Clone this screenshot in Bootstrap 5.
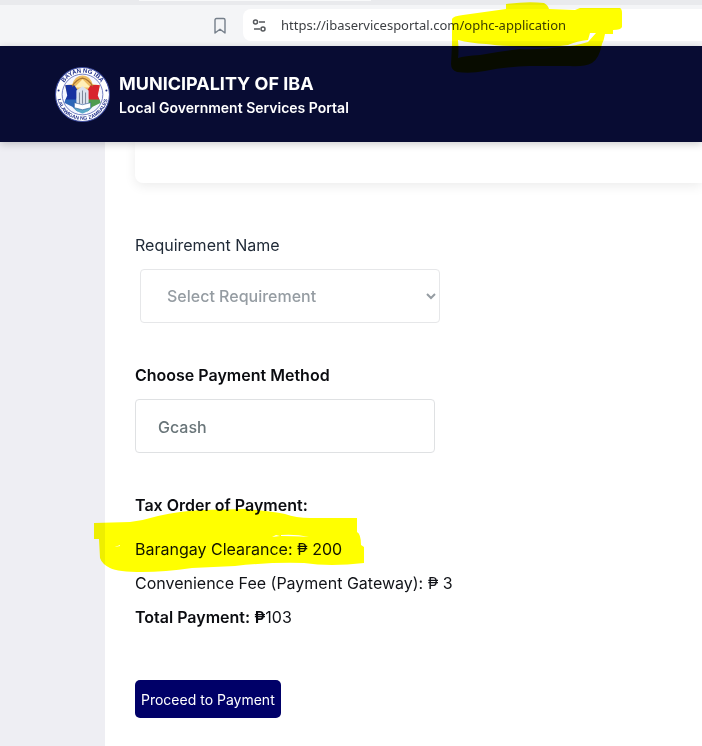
<!DOCTYPE html>
<html lang="en">
<head>
<meta charset="utf-8">
<meta name="viewport" content="width=device-width, initial-scale=1">
<title>Municipality of Iba - Local Government Services Portal</title>
<link href="https://cdn.jsdelivr.net/npm/bootstrap@5.3.0/dist/css/bootstrap.min.css" rel="stylesheet">
<style>
  body { font-family: Inter, "Liberation Sans", sans-serif; font-size: 16px; line-height: 24px; color: #111318; background: #fff; overflow-x: hidden; }
  .browser-bar { background: #f4f5f7; height: 46px; padding-bottom: 5px; }
  .tab-strip { background: #e9eaed; height: 5px; padding-left: 139px; }
  .open-tab { background: #f8f9fa; width: 232px; height: 1px; }
  .tool-row { padding-left: 197px; }
  .address { background: #fff; height: 32px; border-radius: 8px 0 0 8px; padding-left: 9px; }
  .address-input { font: 13px/20px "Noto Sans", "Open Sans", sans-serif; color: #3c3f43; background: transparent; margin-left: 14px; }
  .bookmark-button { width: 46px; line-height: 20px; }
  .portal-header { background: #080c33; height: 96px; padding-left: 54px; box-shadow: 0 2px 8px rgba(0, 0, 0, .2); z-index: 2; }
  .portal-names { padding-top: 4px; }
  .portal-title { font-size: 18px; line-height: 24px; font-weight: 700; }
  .portal-subtitle { font-size: 14px; line-height: 24px; font-weight: 600; }
  .side-rail { background: #eeeef3; width: 105px; }
  .content-pane { padding-left: 30px; padding-bottom: 28px; }
  .panel-end { height: 41px; border-radius: 0 0 0 8px; box-shadow: 0 3px 12px rgba(0, 0, 0, .08); margin-bottom: 50px; }
  .field-label { color: #212b38; margin-bottom: 12px; }
  .strong-label { font-weight: 600; color: #0b0c10; }
  .field-box { width: 300px; height: 54px; border: 1px solid #dfe1e3; border-radius: 4px; font-weight: 500; background-color: #fff; }
  .requirement-select { margin-left: 5px; padding: 0 2px 0 22px; color: #959ca2; border-color: #e6e7e9; }
  .method-input { padding: 2px 22px 0; color: #697579; }
  .form-block { margin-bottom: 40px; }
  .fee-list { margin-top: 20px; margin-bottom: 51px; }
  .fee-list p { margin-bottom: 10px; }
  .pay-button { background: #000068; color: #fff; border: 0; border-radius: 5px; height: 38px; padding: 2px 6px 0; font-size: 14px; }
  .ink { position: absolute; mix-blend-mode: multiply; pointer-events: none; z-index: 5; }
  .ink-url { left: 450px; top: 0; }
  .ink-fee { left: -41px; top: -31px; }
</style>
<script src="https://cdn.jsdelivr.net/npm/bootstrap@5.3.0/dist/js/bootstrap.bundle.min.js"></script>
</head>
<body class="d-flex flex-column min-vh-100 position-relative">
<div class="browser-bar">
  <div class="tab-strip"><div class="open-tab"></div></div>
  <div class="tool-row d-flex align-items-center mt-1">
    <button type="button" class="btn p-0 border-0 bookmark-button" aria-label="Bookmark this page">
      <svg width="14" height="18" viewBox="0 0 14 18" fill="none" stroke="#757f8a" stroke-width="1.4" stroke-linejoin="round"><path d="M2 3Q2 1.500 3.500 1.500H10.500Q12 1.500 12 3V16L7 12.300L2 16Z"/></svg>
    </button>
    <div class="address d-flex align-items-center flex-grow-1">
      <svg width="15" height="15" viewBox="0 0 15 15" fill="none" stroke="#55585c" stroke-width="1.500" aria-hidden="true"><circle cx="3.500" cy="4" r="2"/><path d="M7 4H13M2 11H8"/><circle cx="11" cy="11" r="2"/></svg>
      <input type="text" class="address-input border-0 p-0 flex-grow-1" aria-label="Address" value="https://ibaservicesportal.com/ophc-application">
    </div>
  </div>
</div>

<header class="portal-header d-flex align-items-center gap-2 text-white position-relative">
  <svg width="57" height="57" viewBox="0 0 56 56" role="img" aria-label="Seal of the municipality">
    <defs>
      <path id="arc-top" d="M6.500 28A21.500 21.500 0 0 1 49.500 28"/>
      <path id="arc-bottom" d="M3 28A25 25 0 0 0 53 28"/>
      <clipPath id="shield"><path d="M11 19L18 18Q20 10 28 9Q36 10 38 18L45 19L43 29L46 36L38 40L34 44L28 47L22 44L18 40L10 36L13 29Z"/></clipPath>
    </defs>
    <circle cx="28" cy="28" r="26.500" fill="#fff" stroke="#3d4ca0" stroke-width="1"/>
    <circle cx="28" cy="28" r="20" fill="#f5f6ff" stroke="#5563b4" stroke-width=".8"/>
    <g clip-path="url(#shield)">
      <path fill="#eebd62" d="M10 8H46V25H10Z"/>
      <path fill="#fff0b8" d="M20 21L28 13L36 21Z"/>
      <path fill="#1731a0" d="M8 18L20 19L24 25L22 34H8Z"/>
      <path fill="#d8232d" d="M48 18L36 19L32 25L34 34H48Z"/>
      <path fill="#2c66b8" d="M8 33H24V48H8Z"/>
      <path fill="#4e9b50" d="M32 33H48V48H32Z"/>
      <path fill="#5ca9c8" d="M18 41H38V48H18Z"/>
      <path fill="#dce3ee" d="M22 24L28 20L34 24V41H22Z"/>
      <path stroke="#7c8799" stroke-width="1" d="M25 26V37M28 24V37M31 26V37"/>
      <path fill="#fff" stroke="#315b9a" stroke-width=".6" d="M20 36L28 38L36 36V41L28 43L20 41Z"/>
    </g>
    <path d="M18 20Q22 13 28 12Q34 13 38 20" fill="none" stroke="#a87332" stroke-width="1.200"/>
    <g fill="#22318c" font-family="Liberation Sans, sans-serif" font-weight="700" text-anchor="middle">
      <text font-size="6"><textPath href="#arc-top" startOffset="50%">BAYAN NG IBA</textPath></text>
      <text font-size="5"><textPath href="#arc-bottom" startOffset="50%">LALAWIGAN NG ZAMBALES</textPath></text>
      <circle cx="4.500" cy="24" r="1"/><circle cx="51.500" cy="24" r="1"/>
    </g>
  </svg>
  <div class="portal-names">
    <div class="portal-title">MUNICIPALITY OF IBA</div>
    <div class="portal-subtitle">Local Government Services Portal</div>
  </div>
</header>

<div class="d-flex flex-grow-1">
  <aside class="side-rail flex-shrink-0"></aside>
  <main class="content-pane flex-grow-1">
    <div class="panel-end"></div>
    <form>
      <div class="form-block">
        <label for="requirement" class="field-label d-block">Requirement Name</label>
        <select id="requirement" class="field-box requirement-select d-block"><option>Select Requirement</option></select>
      </div>
      <div class="form-block">
        <label for="method" class="field-label strong-label d-block">Choose Payment Method</label>
        <input id="method" type="text" class="field-box method-input d-block" value="Gcash">
      </div>
      <div class="strong-label">Tax Order of Payment:</div>
      <div class="fee-list position-relative">
        <p>Barangay Clearance: ₱ 200</p>
        <p>Convenience Fee (Payment Gateway): ₱ 3</p>
        <p><span class="strong-label">Total Payment: ₱</span>103</p>
        <svg class="ink ink-fee" width="272" height="68" viewBox="94 506 272 68" aria-hidden="true"><path fill="#ff0" fill-rule="evenodd" d="M94 523L130 522Q145 520 158 516Q180 511 202 510L245 509Q270 511 285 514Q296 518 310 518H357V532Q361 534 361 545L364 547V563Q330 567 304 563Q270 562 235 566L192 568Q165 572 142 572Q118 572 110 568Q102 564 100 558L99 539H94ZM115 547L120 545V546ZM272 537L280 536L276 535ZM281 535Q296 534 309 537Q292 536 281 536Z"/></svg>
      </div>
      <button type="button" class="pay-button">Proceed to Payment</button>
    </form>
  </main>
</div>
<svg class="ink ink-url" width="176" height="74" viewBox="450 0 176 74" aria-hidden="true"><path fill="#ff0" fill-rule="evenodd" d="M452 19Q453 16 463 15L506 9V4Q528 1 544 3Q548 5 549 9L575 10L580 8H620Q622 9 622 13V27Q621 30 613 30V34H605Q604 40 602 44Q599 59 592 63Q584 67 570 66L530 66Q505 67 485 71Q470 74 457 72Q451 70 451 64L452 45ZM458 40Q459 52 458 58Q464 56 480 55Q500 51 520 49Q540 50 560 47Q576 46 588 42L596 33H590L588 40Q577 41 568 45Q550 48 530 47Q500 46 486 44Q470 43 458 40Z"/></svg>
</body>
</html>
